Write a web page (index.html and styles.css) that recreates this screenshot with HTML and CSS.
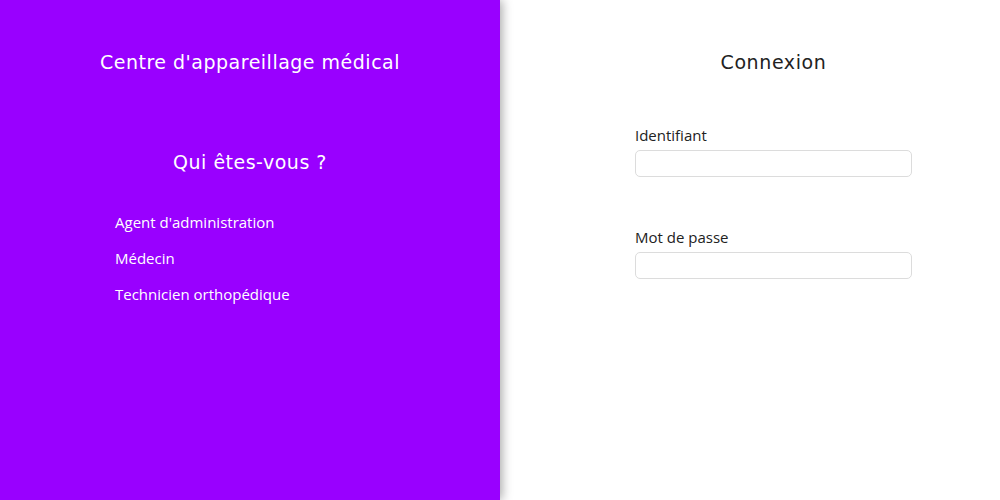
FILE: index.html
```html
<!DOCTYPE html>
<html lang="fr">
<head>
<meta charset="utf-8">
<title>Centre d'appareillage médical</title>
<link rel="stylesheet" href="styles.css">
</head>
<body>
<div class="page">
  <aside class="side">
    <h1 class="brand">Centre d'appareillage médical</h1>
    <h2 class="who">Qui êtes-vous ?</h2>
    <ul class="roles">
      <li>Agent d'administration</li>
      <li>Médecin</li>
      <li>Technicien orthopédique</li>
    </ul>
  </aside>
  <main class="main">
    <form class="login">
      <h2 class="login-title">Connexion</h2>
      <label class="field">
        <span class="field-label">Identifiant</span>
        <input class="field-input" type="text">
      </label>
      <label class="field field-second">
        <span class="field-label">Mot de passe</span>
        <input class="field-input" type="password">
      </label>
    </form>
  </main>
</div>
</body>
</html>
```

FILE: styles.css
```css
* { box-sizing: border-box; }
html, body { margin: 0; padding: 0; }
body { font-family: "Open Sans", "Noto Sans", sans-serif; background: #fff; }
.page { display: flex; width: 1000px; height: 500px; overflow: hidden; }
.side {
  width: 500px;
  flex: none;
  background: #9900ff;
  color: #fff;
  box-shadow: 2px 0 10px rgba(0,0,0,0.35);
  position: relative;
  z-index: 1;
  padding-top: 50px;
  display: flex;
  flex-direction: column;
}
.brand, .who, .login-title {
  font-family: "DejaVu Sans", sans-serif;
  font-weight: 400;
  font-size: 19px;
  line-height: 24px;
  margin: 0;
  text-align: center;
  letter-spacing: 0.5px;
}
.who { margin-top: 76px; }
.roles {
  list-style: none;
  margin: 30px 0 0;
  padding: 0 0 0 115px;
  font-size: 15px;
}
.roles li { line-height: 36px; }
.main { flex: 1; padding: 50px 0 0 135px; }
.login { width: 277px; display: flex; flex-direction: column; }
.login-title { color: #222; margin-bottom: 50px; letter-spacing: 0.6px; }
.field { display: flex; flex-direction: column; gap: 4px; }
.field-second { margin-top: 49px; }
.field-label { font-size: 15px; line-height: 22px; color: #222; }
.field-input {
  height: 27px;
  border: 1px solid #dcdcdc;
  border-radius: 5px;
  background: #fff;
  font: inherit;
  padding: 0 8px;
  outline: none;
}
```
